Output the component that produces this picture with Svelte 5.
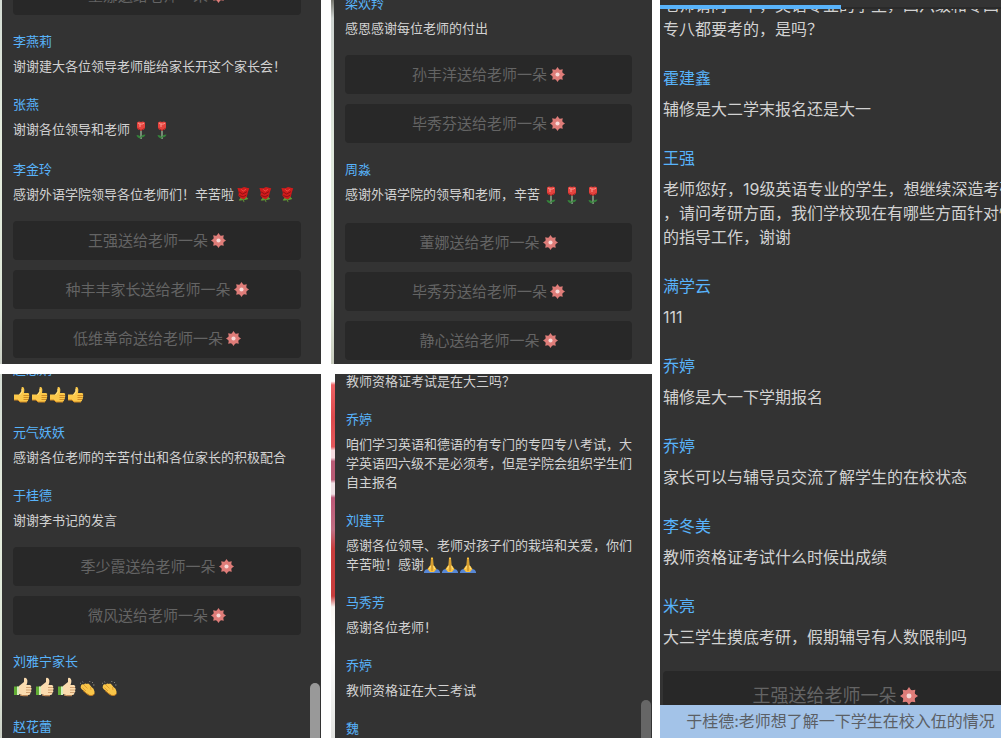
<script>
	const boards = [
		{
			id: 'top-left',
			items: [
				{ gifts: ['董娜送给老师一朵'] },
				{ name: '李燕莉', text: '谢谢建大各位领导老师能给家长开这个家长会！' },
				{ name: '张燕', text: '谢谢各位领导和老师', icons: ['rose', 'rose'] },
				{ name: '李金玲', text: '感谢外语学院领导各位老师们！辛苦啦', icons: ['bloom', 'bloom', 'bloom'] },
				{ gifts: ['王强送给老师一朵', '种丰丰家长送给老师一朵', '低维革命送给老师一朵'] }
			]
		},
		{
			id: 'top-right',
			items: [
				{ name: '梁欢羚', text: '感恩感谢每位老师的付出' },
				{ gifts: ['孙丰洋送给老师一朵', '毕秀芬送给老师一朵'] },
				{ name: '周淼', text: '感谢外语学院的领导和老师，辛苦', icons: ['rose', 'rose', 'rose'] },
				{ gifts: ['董娜送给老师一朵', '毕秀芬送给老师一朵', '静心送给老师一朵'] }
			]
		},
		{
			id: 'bottom-left',
			thumb: 15,
			items: [
				{ name: '赵思娟', text: '', icons: ['thumb', 'thumb', 'thumb', 'thumb'] },
				{ name: '元气妖妖', text: '感谢各位老师的辛苦付出和各位家长的积极配合' },
				{ name: '于桂德', text: '谢谢李书记的发言' },
				{ gifts: ['季少霞送给老师一朵', '微风送给老师一朵'] },
				{ name: '刘雅宁家长', text: '', icons: ['sleeve', 'sleeve', 'sleeve', 'clap', 'clap'] },
				{ name: '赵花蕾' }
			]
		},
		{
			id: 'bottom-right',
			thumb: 10.4,
			items: [
				{ text: '教师资格证考试是在大三吗？' },
				{ name: '乔婷', text: '咱们学习英语和德语的有专门的专四专八考试，大学英语四六级不是必须考，但是学院会组织学生们自主报名' },
				{ name: '刘建平', text: '感谢各位领导、老师对孩子们的栽培和关爱，你们辛苦啦！感谢', icons: ['pray', 'pray', 'pray'] },
				{ name: '马秀芳', text: '感谢各位老师！' },
				{ name: '乔婷', text: '教师资格证在大三考试' },
				{ name: '魏' }
			]
		}
	];

	const live = [
		{ text: '老师请问一下，英语专业的学生，四六级和专四\n专八都要考的，是吗？' },
		{ name: '霍建鑫', text: '辅修是大二学末报名还是大一' },
		{ name: '王强', text: '老师您好，19级英语专业的学生，想继续深造考研\n，请问考研方面，我们学校现在有哪些方面针对性\n的指导工作，谢谢' },
		{ name: '满学云', text: '111' },
		{ name: '乔婷', text: '辅修是大一下学期报名' },
		{ name: '乔婷', text: '家长可以与辅导员交流了解学生的在校状态' },
		{ name: '李冬美', text: '教师资格证考试什么时候出成绩' },
		{ name: '米亮', text: '大三学生摸底考研，假期辅导有人数限制吗' },
		{ gifts: ['王强送给老师一朵'] }
	];
</script>

{#snippet icon(kind)}
	{#if kind === 'rose'}
		<svg class="icon tall" viewBox="0 0 21 21" aria-label="玫瑰">
			<path d="M11 10v9" stroke="#9dba9a" stroke-width="1.300" />
			<path d="M11 18.500C8.500 18.500 7 17 6.500 15c2.500 0 4.500 1 4.500 3.500zM11 17.500c0-2 1.500-3 4.500-3-.5 2-2 3-4.500 3z" fill="#35833b" />
			<path d="M7 2.500l2-1 2 .5 2-.5 2 1V8c-1 3-7 3-8 0z" fill="#e5433e" />
			<path d="M8 3c2 1.500 5 1.500 6 0M10 4v3" stroke="#ff9c92" fill="none" />
			<path d="M7 8l4 2.500L15 8" stroke="#a92525" fill="none" />
		</svg>
	{:else if kind === 'bloom'}
		<svg class="icon wide" viewBox="0 0 22 19" aria-label="玫瑰">
			<path d="M8 11l2 6M9 14.500l-4 .5 2-3zM10 14.500l4-1-2-2z" stroke="#5d9334" fill="#679d38" />
			<path d="M3 2l4 .5L10 1l4 1 1.500.5-1.500 4-1 4.500-3 3-3.500-1L4 10l.5-3z" fill="#d01c1c" />
			<path d="M4.500 6l4 2.500L13 6M5 10l4 1.500 3.500-2" stroke="#8f0f12" fill="none" />
			<path d="M7 3.500l2 2 3-2" stroke="#f24d44" fill="none" />
		</svg>
	{:else if kind === 'thumb'}
		<svg class="icon" viewBox="0 0 18 18" aria-label="赞">
			<path d="M1 8.500h5L8.500 5V2q0-1.500 1.500-1Q12 2 11 7h4q2 .5 1 2 .8 1.300-.2 2.300.5 1.300-.5 2.200 0 1.800-1.800 2.500H7L5 14H1z" fill="#fbc84a" />
			<path d="M10.500 9.500H16M10.500 11.500h5M10.500 13.500H15" stroke="#c77c19" stroke-width=".8" />
			<path d="M1 14h4l2 2h7" stroke="#d18a22" fill="none" />
			<path d="M9 3v3L6.500 9" stroke="#ffe58b" fill="none" />
		</svg>
	{:else if kind === 'sleeve'}
		<svg class="icon tall wide" viewBox="0 0 22 21" aria-label="点赞">
			<path d="M1 9.500h5V18H1z" fill="#62ae35" />
			<path d="M4 9.500h2V18H4z" fill="#d7edbd" />
			<path d="M6 9l5-4V2q0-2 2-1 2.500 2 .5 7H17q2 .7 1 2.500 1.500 1.500 0 2.500 1 2-.5 2.500 0 2.500-2 2.500H9l-3-1z" fill="#fbdcaf" />
			<path d="M13 10.500h5M13 13h5M13 15.500h4" stroke="#c99361" stroke-width=".8" />
			<path d="M7 18l3 .7h5" stroke="#d99b61" fill="none" />
		</svg>
	{:else if kind === 'clap'}
		<svg class="icon tall wide" viewBox="0 0 22 21" aria-label="鼓掌">
			<path d="M1 6l1 .5M3.500 4.500l.5 1M11 4l-.5 1M14 5l-1 1M15.500 8H14" stroke="#85857f" fill="none" />
			<path d="M2 8.500Q3 6.500 5 7.500q1-1.500 3-.5 1-1 2.500.5l2 2.500Q15 11 15.500 14.500 16 18 12.500 18.500 9 18 6.500 15.500L2.500 12q-1.500-1.500-.5-3.500z" fill="#fac649" />
			<path d="M5 8l3.500 3.500M3.500 10.500L7 14M11.500 10l.5 3" stroke="#d9962b" stroke-width=".8" fill="none" />
			<path d="M4 13.500L8 17q2.500 2 5 1.500 2-.5 2.500-2" stroke="#c27c20" fill="none" />
		</svg>
	{:else if kind === 'pray'}
		<svg class="icon" viewBox="0 0 18 18" aria-label="祈祷">
			<path d="M0 16q1-3 4-3l4 3v1H0zM16 16q-1-3-4-3l-4 3v1h8z" fill="#5787d6" />
			<path d="M7 2q1-1.500 2 0l.5 7 3 4-2.500 3H6l-2.500-3 3-4z" fill="#fbc13e" />
			<path d="M8 3v12" stroke="#a66c1d" stroke-width=".8" />
			<path d="M6.500 10L5.500 13M9.700 10l1 3" stroke="#ffe184" fill="none" />
		</svg>
	{/if}
{/snippet}

{#snippet entry(item)}
	{#if item.gifts}
		<div class="gifts">
			{#each item.gifts as gift}
				<div class="gift">
					<span>{gift}</span>
					<svg viewBox="-8 -8 16 16" aria-hidden="true">
						<g fill="#df7d79">
							<circle r="5.600" />
							{#each [0, 45, 90, 135, 180, 225, 270, 315] as turn}
								<path d="M-2.400-4.500L0-8l2.400 3.500z" transform="rotate({turn})" />
							{/each}
						</g>
						<circle r="2.200" fill="#f6d9d7" />
					</svg>
				</div>
			{/each}
		</div>
	{:else}
		<div class="message">
			{#if item.name}
				<h2>{item.name}</h2>
			{/if}
			{#if item.text !== undefined}
				<p>{item.text}{#each item.icons ?? [] as kind}{@render icon(kind)}{/each}</p>
			{/if}
		</div>
	{/if}
{/snippet}

<main>
	<div class="boards">
		{#each boards as board}
			<div class="cell {board.id}">
				<section class="panel">
					{#each board.items as item}
						{@render entry(item)}
					{/each}
					{#if board.thumb}
						<div class="scroll" style="height: {board.thumb}%"></div>
					{/if}
				</section>
			</div>
		{/each}
	</div>

	<section class="panel live">
		{#each live as item}
			{@render entry(item)}
		{/each}
		<div class="cover"></div>
		<progress value="53" max="100" aria-label="播放进度"></progress>
		<footer>于桂德:老师想了解一下学生在校入伍的情况</footer>
	</section>
</main>

<style>
	:global(body) {
		background: #fff;
	}

	main {
		display: grid;
		grid-template-columns: 652fr 341fr;
		gap: 8px;
		height: 100vh;
		padding-bottom: 1px;
		box-sizing: border-box;
		font-family: Inter, "Noto Sans CJK SC", sans-serif;
		font-size: 13px;
		line-height: 19px;
		color: #d2d2d2;
	}

	.boards {
		display: grid;
		grid-template-columns: 1fr 1fr;
		grid-template-rows: 1fr 1fr;
		gap: 10px;
		min-width: 0;
		min-height: 0;
	}

	.cell {
		display: grid;
		min-width: 0;
		min-height: 0;
		padding-left: 2px;
		background: linear-gradient(#d5ddd5, #e6eedf 40%, #dfe8d9 85%, #cbd0c6);
	}

	.top-right {
		padding-left: 3px;
		background: linear-gradient(#77776f, #cdd3d0 5%, #dfe8dc 40%, #e1eadb 82%, #c8ccbe);
	}

	.bottom-right {
		padding-left: 4px;
		background: linear-gradient(
			#fff 2%, #ef6265 3%, #dd4a4d 12%, #e4585c 20%,
			#f5dce0 21%, #f5dce0 23%, #b85b75 24%, #b85b75 29%,
			#efe1e6 30%, #efe1e6 33%, #bd5877 34%, #c06f83 43%,
			#c83d3d 48%, #c83d3d 61%, #faf6f2 64%, #fff 75%, #e2e3e0
		);
	}

	.panel {
		position: relative;
		display: flex;
		flex-direction: column;
		justify-content: flex-end;
		gap: 19px;
		min-width: 0;
		min-height: 0;
		overflow: hidden;
		box-sizing: border-box;
		padding: 0 20px 6px 11px;
		background: #333;
	}

	.top-right .panel {
		padding-bottom: 4px;
	}

	.bottom-left .panel {
		padding-bottom: 2px;
	}

	.bottom-right .panel {
		padding-bottom: 0;
	}

	.message,
	.gifts {
		flex: none;
		display: flex;
		flex-direction: column;
		gap: 6px;
	}

	h2,
	p {
		margin: 0;
		font-size: inherit;
		font-weight: 400;
	}

	h2 {
		color: #58b3fb;
	}

	.icon {
		width: 18px;
		height: 18px;
		vertical-align: middle;
		margin: -5px 0;
		fill: none;
	}

	.icon.tall {
		width: 21px;
		height: 21px;
		margin: 0;
	}

	.icon.wide {
		width: 22px;
	}

	.gifts {
		gap: 10px;
		margin: -2px 0;
	}

	.gifts:last-child {
		margin-bottom: 0;
	}

	.gift {
		display: flex;
		align-items: center;
		justify-content: center;
		gap: 3px;
		height: 39px;
		border-radius: 4px;
		background: #282828;
		color: #646464;
		font-size: 15px;
	}

	.gift svg {
		width: 1em;
		height: 1em;
	}

	.scroll {
		position: absolute;
		right: 1px;
		bottom: 0;
		width: 10px;
		border-radius: 5px 5px 0 0;
		background: #999;
	}

	.bottom-right .scroll {
		background: #666;
	}

	.live {
		gap: 25px;
		padding: 0 0 17px 3px;
		font-size: 16px;
		line-height: 24px;
	}

	.live .message {
		gap: 7px;
		white-space: pre;
	}

	.live .gifts {
		margin: -3px -6px 0 0;
	}

	.live .gift {
		height: 50px;
		font-size: 18px;
	}

	.cover {
		position: absolute;
		inset: 0 0 auto;
		height: 7px;
		background: #333;
		border-bottom: 2px solid #2a2a2a;
	}

	progress {
		position: absolute;
		top: 5px;
		left: 0;
		width: 100%;
		height: 4px;
		border: 0;
		appearance: none;
		background: transparent;
	}

	progress::-webkit-progress-bar {
		background: transparent;
	}

	progress::-webkit-progress-value {
		background: #58b3fb;
	}

	footer {
		position: absolute;
		inset: auto 0 0;
		padding-left: 20px;
		line-height: 33px;
		text-align: center;
		white-space: nowrap;
		background: #a3c3e8;
		color: #5b5f65;
	}
</style>
